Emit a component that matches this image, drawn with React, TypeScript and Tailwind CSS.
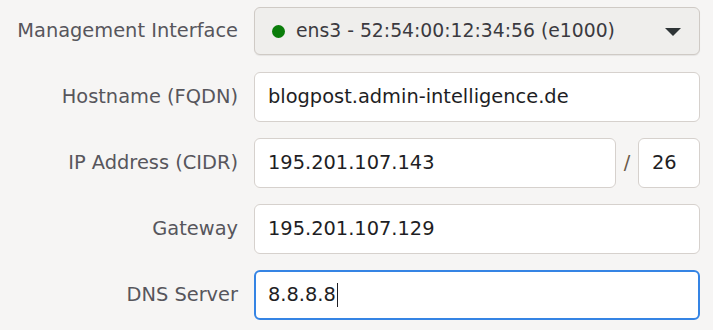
import React from "react";

const font = { fontFamily: '"DejaVu Sans", "Noto Sans", sans-serif' };

function Label({ children }: { children: React.ReactNode }) {
  return (
    <div className="w-[238px] shrink-0 text-right text-[#57565c] text-[19.4px]">{children}</div>
  );
}

function Field({ value, focused, className }: { value: string; focused?: boolean; className?: string }) {
  return (
    <div
      className={
        "h-[50px] bg-white rounded-[6px] flex items-center text-[19.4px] text-[#1e1e24] " +
        (focused ? "border-2 border-[#3584e4] pl-[12px]" : "border border-[#d6d1cd] pl-[13px]") +
        " " +
        (className ?? "")
      }
    >
      <span>{value}</span>
      {focused && <span className="inline-block w-px h-[24px] bg-[#1e1e24] ml-px" />}
    </div>
  );
}

export default function App() {
  return (
    <div className="w-[713px] h-[330px] bg-[#f6f5f4] pt-[7px]" style={font}>
      <div className="flex items-center">
        <Label>Management Interface</Label>
        <div className="ml-[16px] w-[446px] h-[48px] rounded-[6px] border border-[#cfcac5] bg-[#efeeec] flex items-center pl-[17px] pr-[17px] text-[18.8px] text-[#3b3a40] shadow-[0_1px_1px_rgba(0,0,0,0.07)]">
          <span className="w-[13px] h-[13px] rounded-full bg-[#0a7d0a] mr-[11px]" />
          <span className="flex-1">ens3 - 52:54:00:12:34:56 (e1000)</span>
          <svg width="18" height="9" viewBox="0 0 18 9">
            <path d="M1 1 L17 1 L9 9 Z" fill="#2e3436" />
          </svg>
        </div>
      </div>
      <div className="flex items-center mt-[17px]">
        <Label>Hostname (FQDN)</Label>
        <Field value="blogpost.admin-intelligence.de" className="ml-[16px] w-[446px]" />
      </div>
      <div className="flex items-center mt-[16px]">
        <Label>IP Address (CIDR)</Label>
        <Field value="195.201.107.143" className="ml-[16px] w-[362px]" />
        <span className="w-[22px] text-center text-[#6b5a48] text-[19.4px]">/</span>
        <Field value="26" className="w-[62px]" />
      </div>
      <div className="flex items-center mt-[16px]">
        <Label>Gateway</Label>
        <Field value="195.201.107.129" className="ml-[16px] w-[446px]" />
      </div>
      <div className="flex items-center mt-[16px]">
        <Label>DNS Server</Label>
        <Field value="8.8.8.8" focused className="ml-[16px] w-[446px]" />
      </div>
    </div>
  );
}
